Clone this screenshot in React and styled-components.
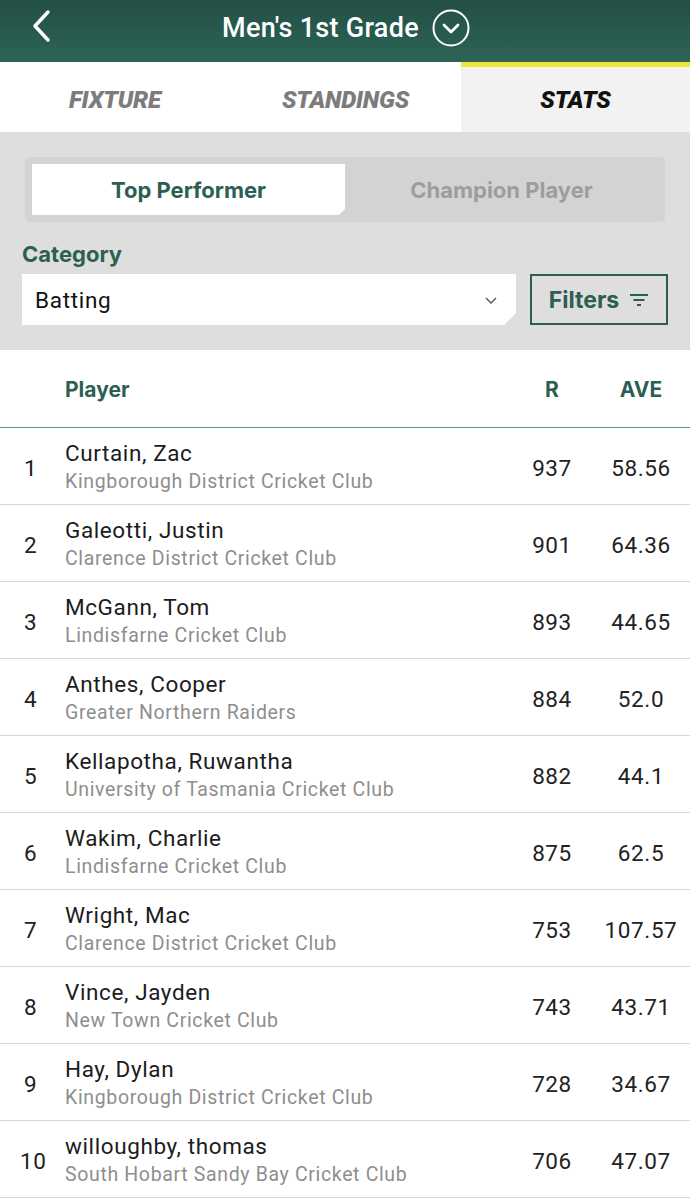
import React from 'react';
import styled, {createGlobalStyle} from 'styled-components';

const GREEN = '#2b5f52';

const Global = createGlobalStyle`
  body {
    margin: 0;
    background: #fff;
    font-family: Roboto, "Noto Sans", sans-serif;
  }
`;

const Page = styled.div`
  width: 690px;
  height: 1200px;
  overflow: hidden;
  background: #fff;
`;

const Header = styled.div`
  position: relative;
  height: 62px;
  display: flex;
  align-items: center;
  justify-content: center;
  background: linear-gradient(180deg, #234f46 0%, #2d6456 100%);
`;

const Back = styled.div`
  position: absolute;
  left: 28px;
  top: 9px;
  width: 28px;
  height: 36px;
`;

const Title = styled.div`
  display: flex;
  align-items: center;
  gap: 13px;
  color: #fff;
  font-family: Roboto, sans-serif;
  font-weight: 500;
  font-size: 27px;
  letter-spacing: 0.3px;
  margin-left: 2px;
  margin-top: -6px;
`;

const Tabs = styled.div`
  display: flex;
  height: 70px;
  background: #fff;
`;

const Tab = styled.div`
  flex: ${p => p.$flex};
  display: flex;
  align-items: center;
  justify-content: center;
  font-family: Roboto, sans-serif;
  font-weight: 900;
  font-style: italic;
  font-size: 24px;
  letter-spacing: -0.2px;
  color: ${p => (p.$active ? '#111' : '#7c7c7c')};
  background: ${p => (p.$active ? '#f2f2f2' : '#fff')};
  border-top: 5px solid ${p => (p.$active ? '#f1e53a' : 'transparent')};
  box-sizing: border-box;
`;

const Controls = styled.div`
  background: #dedede;
  padding: 25px 22px 25px 22px;
`;

const Segment = styled.div`
  display: flex;
  margin: 0 3px;
  padding: 7px;
  background: #d3d3d3;
  border-radius: 5px;
`;

const SegItem = styled.div`
  flex: 1;
  height: 51px;
  display: flex;
  align-items: center;
  justify-content: center;
  font-family: Inter, "Open Sans", sans-serif;
  font-weight: 700;
  font-size: 22px;
  color: ${p => (p.$active ? GREEN : '#9d9d9d')};
  background: ${p => (p.$active ? '#fff' : 'transparent')};
  clip-path: polygon(0 0, 100% 0, 100% calc(100% - 6px), calc(100% - 6px) 100%, 0 100%);
`;

const Label = styled.div`
  margin-top: 19px;
  font-family: Inter, "Open Sans", sans-serif;
  font-weight: 700;
  font-size: 22px;
  color: ${GREEN};
`;

const Row = styled.div`
  display: flex;
  gap: 14px;
  margin-top: 7px;
`;

const Select = styled.div`
  flex: 1;
  height: 51px;
  display: flex;
  align-items: center;
  justify-content: space-between;
  padding: 0 18px 0 13px;
  background: #fff;
  font-family: Roboto, sans-serif;
  font-size: 22.5px;
  letter-spacing: 0.7px;
  color: #111;
  clip-path: polygon(0 0, 100% 0, 100% calc(100% - 12px), calc(100% - 12px) 100%, 0 100%);
`;

const FilterBtn = styled.div`
  width: 138px;
  height: 51px;
  box-sizing: border-box;
  border: 2.5px solid ${GREEN};
  display: flex;
  align-items: center;
  justify-content: center;
  gap: 10px;
  font-family: Inter, "Open Sans", sans-serif;
  font-weight: 700;
  font-size: 23px;
  color: ${GREEN};
`;

const TableHead = styled.div`
  display: flex;
  align-items: center;
  height: 78px;
  border-bottom: 1.5px solid #5b9484;
  font-family: Inter, "Open Sans", sans-serif;
  font-weight: 700;
  font-size: 21px;
  color: ${GREEN};
  padding-top: 2px;
  box-sizing: border-box;
`;

const Rank = styled.div`
  width: 65px;
  box-sizing: border-box;
  padding: 0 24px 0 20px;
  font-size: 22.5px;
  color: #222;
  text-align: center;
`;

const PlayerCol = styled.div`
  flex: 1;
  min-width: 0;
`;

const RunCol = styled.div`
  width: 60px;
  text-align: center;
  margin-right: 11px;
`;

const AveCol = styled.div`
  width: 96px;
  text-align: center;
  margin-right: 1px;
`;

const Line = styled.div`
  display: flex;
  align-items: center;
  height: 77px;
  box-sizing: border-box;
  border-bottom: 1.5px solid #d8d8d8;
  font-family: Roboto, sans-serif;
  font-size: 22.5px;
  letter-spacing: 0.6px;
  color: #222;
  padding-top: 3px;
`;

const Name = styled.div`
  font-size: 22.5px;
  color: #1c1c1c;
  line-height: 27px;
`;

const Club = styled.div`
  font-size: 19.5px;
  letter-spacing: 0.65px;
  color: #8e8e8e;
  line-height: 27px;
  margin-top: 1px;
`;

const players = [
  ['Curtain, Zac', 'Kingborough District Cricket Club', '937', '58.56'],
  ['Galeotti, Justin', 'Clarence District Cricket Club', '901', '64.36'],
  ['McGann, Tom', 'Lindisfarne Cricket Club', '893', '44.65'],
  ['Anthes, Cooper', 'Greater Northern Raiders', '884', '52.0'],
  ['Kellapotha, Ruwantha', 'University of Tasmania Cricket Club', '882', '44.1'],
  ['Wakim, Charlie', 'Lindisfarne Cricket Club', '875', '62.5'],
  ['Wright, Mac', 'Clarence District Cricket Club', '753', '107.57'],
  ['Vince, Jayden', 'New Town Cricket Club', '743', '43.71'],
  ['Hay, Dylan', 'Kingborough District Cricket Club', '728', '34.67'],
  ['willoughby, thomas', 'South Hobart Sandy Bay Cricket Club', '706', '47.07'],
];

export default function App() {
  return (
    <Page>
      <Global/>
      <Header>
        <Back>
          <svg width="28" height="36" viewBox="0 0 28 36">
            <path d="M20 3 L7 17 L20 31" fill="none" stroke="#fff" strokeWidth="3.5" strokeLinecap="round" strokeLinejoin="round"/>
          </svg>
        </Back>
        <Title>
          <span>Men's 1st Grade</span>
          <svg width="38" height="38" viewBox="0 0 38 38">
            <circle cx="19" cy="19" r="17.5" fill="none" stroke="#fff" strokeWidth="2"/>
            <path d="M12 16 L19 23 L26 16" fill="none" stroke="#fff" strokeWidth="2.8" strokeLinecap="round" strokeLinejoin="round"/>
          </svg>
        </Title>
      </Header>
      <Tabs>
        <Tab $flex="0 0 230px">FIXTURE</Tab>
        <Tab $flex="0 0 231px">STANDINGS</Tab>
        <Tab $flex="1" $active>STATS</Tab>
      </Tabs>
      <Controls>
        <Segment>
          <SegItem $active>Top Performer</SegItem>
          <SegItem>Champion Player</SegItem>
        </Segment>
        <Label>Category</Label>
        <Row>
          <Select>
            <span>Batting</span>
            <svg width="14" height="10" viewBox="0 0 14 10">
              <path d="M2 3 L7 8 L12 3" fill="none" stroke="#555" strokeWidth="1.4"/>
            </svg>
          </Select>
          <FilterBtn>
            <span>Filters</span>
            <svg width="20" height="16" viewBox="0 0 20 16">
              <path d="M1 3 H19 M4.5 8 H15.5 M8 13 H12" stroke={GREEN} strokeWidth="2"/>
            </svg>
          </FilterBtn>
        </Row>
      </Controls>
      <TableHead>
        <Rank/>
        <PlayerCol>Player</PlayerCol>
        <RunCol>R</RunCol>
        <AveCol>AVE</AveCol>
      </TableHead>
      {players.map((p, i) => (
        <Line key={i}>
          <Rank>{i + 1}</Rank>
          <PlayerCol>
            <Name>{p[0]}</Name>
            <Club>{p[1]}</Club>
          </PlayerCol>
          <RunCol>{p[2]}</RunCol>
          <AveCol>{p[3]}</AveCol>
        </Line>
      ))}
    </Page>
  );
}
